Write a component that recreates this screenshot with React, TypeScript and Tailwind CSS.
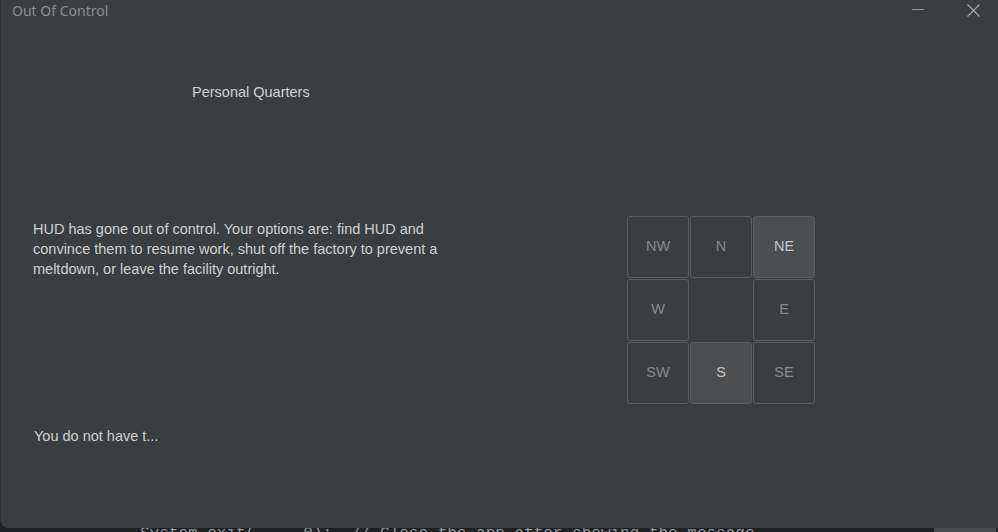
import React from "react";

const cells: { label: string; active?: boolean; empty?: boolean }[] = [
  { label: "NW" },
  { label: "N" },
  { label: "NE", active: true },
  { label: "W" },
  { label: "", empty: true },
  { label: "E" },
  { label: "SW" },
  { label: "S", active: true },
  { label: "SE" },
];

export default function App() {
  return (
    <div className="relative w-[998px] h-[532px] overflow-hidden bg-[#1f2123]">
      {/* desktop/editor behind the window */}
      <div
        className="absolute left-[140px] top-[522px] text-[16px] text-[#8e949c] whitespace-pre"
        style={{ fontFamily: '"Liberation Mono", "DejaVu Sans Mono", monospace' }}
      >
        {"System.exit(     0);  // Close the app after showing the message"}
      </div>
      <div className="absolute left-[934px] top-[524px] w-[62px] h-[8px] bg-[#4a4c4f]" />

      {/* window */}
      <div
        className="relative z-10 flex flex-col w-[998px] h-[528px] bg-[#3b3e41] rounded-bl-[8px] border-l border-[#2e3033]"
        style={{ fontFamily: '"Liberation Sans", Arial, sans-serif' }}
      >
        {/* title bar */}
        <div className="flex items-center h-[22px] shrink-0">
          <div
            className="pl-[11px] text-[14px] text-[#8b8e92] leading-none"
            style={{ fontFamily: '"Noto Sans", "Open Sans", sans-serif' }}
          >
            Out Of Control
          </div>
          <div className="flex-1" />
          <div className="w-[12px] h-[1px] bg-[#9a9c9e] mt-[-3px]" />
          <div className="w-[43px]" />
          <svg width="13" height="13" viewBox="0 0 13 13" className="mt-[-2px]">
            <path d="M0.5 0.5 L12.5 12.5 M12.5 0.5 L0.5 12.5" stroke="#a3a5a7" strokeWidth="1.2" />
          </svg>
          <div className="w-[18px]" />
        </div>

        {/* location */}
        <div className="pl-[191px] pt-[60px] text-[14.5px] leading-[20px] text-[#d2d2d2]">
          Personal Quarters
        </div>

        {/* main row */}
        <div className="flex pt-[105px]">
          <div className="pl-[32px] w-[470px] pt-[12px] text-[14.5px] leading-[20px] text-[#d0d0d0]">
            HUD has gone out of control. Your options are: find HUD and convince them to resume work, shut off the
            factory to prevent a meltdown, or leave the facility outright.
          </div>
          <div className="ml-[156px] grid grid-cols-[62px_62px_62px] grid-rows-[62px_62px_62px] gap-[1px] mt-[9px]">
            {cells.map((c, i) =>
              c.empty ? (
                <div key={i} />
              ) : (
                <div
                  key={i}
                  className={`flex items-center justify-center rounded-[3px] border border-[#5a5c5f] text-[14.5px] ${
                    c.active ? "bg-[#4d4e50] text-[#c4c6c8]" : "bg-[#3b3e41] text-[#868a8e]"
                  }`}
                >
                  {c.label}
                </div>
              )
            )}
          </div>
        </div>

        <div className="pl-[33px] pt-[22px] text-[14.5px] leading-[20px] text-[#d0d0d0]">You do not have t...</div>
      </div>
    </div>
  );
}
